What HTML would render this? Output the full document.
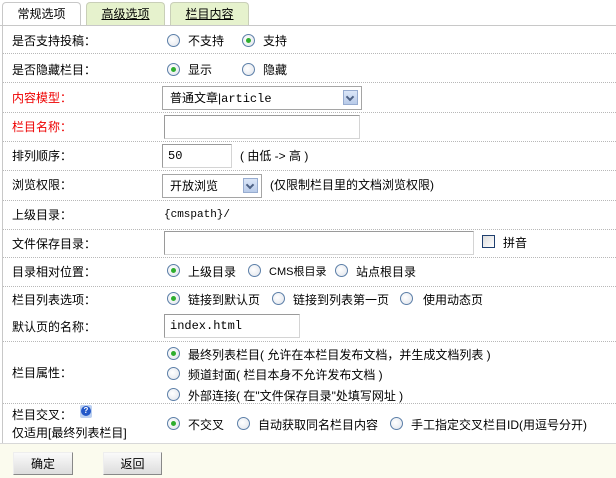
<!DOCTYPE html>
<html><head><meta charset="utf-8"><style>
body{margin:0;width:616px;height:477px;background:#fff;font-family:"Liberation Sans","Noto Sans CJK SC",sans-serif;font-size:12px;color:#000;position:relative;overflow:hidden}
.a{position:absolute;white-space:nowrap;line-height:14px}
.tab{position:absolute;top:2px;height:23px;border:1px solid #c9cfb8;border-bottom:none;border-radius:4px 4px 0 0;background:#e6f2cd;text-align:center;line-height:22px;font-size:12px}
.tab u{text-decoration:underline}
.hl{position:absolute;left:3px;right:0;border-top:1px dotted #b8b8b8;height:0}
.r{position:absolute;width:11px;height:11px;border:1px solid #5c7fa8;border-radius:50%;background:radial-gradient(circle at 40% 40%,#fff,#dfe3ea)}
.r.on::after{content:"";position:absolute;left:3px;top:3px;width:5px;height:5px;border-radius:50%;background:#2fae2f}
.in{position:absolute;border:1px solid #9a9a9a;border-right-color:#d4d4d4;border-bottom-color:#d4d4d4;background:#fff;height:22px;box-sizing:border-box;font-family:"Liberation Mono","Noto Sans CJK SC",monospace;font-size:12px;line-height:20px;padding-left:5px}
.sel{position:absolute;border:1px solid #a5a5a5;height:24px;box-sizing:border-box;background:#fff;line-height:22px;padding-left:7px}
.sel i{position:absolute;right:3px;top:3px;width:15px;height:15px;background:linear-gradient(#dbe6f8,#b8cbe9);border:1px solid #97acd0;box-sizing:border-box}
.sel i::after{content:"";position:absolute;left:3px;top:3px;width:4px;height:4px;border-right:2px solid #4d6185;border-bottom:2px solid #4d6185;transform:rotate(45deg)}
.btn{position:absolute;top:452px;height:23px;border:1px solid #888;border-top-color:#eee;border-left-color:#eee;background:linear-gradient(#fafafa,#ddd);text-align:center;line-height:22px;box-sizing:border-box}
.red{color:#e00}
</style></head><body>
<div class="tab" style="left:2px;width:77px;background:#fff;border-color:#c8c8c8">常规选项</div>
<div class="tab" style="left:86px;width:77px"><u>高级选项</u></div>
<div class="tab" style="left:170px;width:77px"><u>栏目内容</u></div>
<div style="position:absolute;left:0;right:0;top:25px;border-top:1px solid #c8c8c8"></div>
<div style="position:absolute;left:2px;top:25px;height:418px;border-left:1px solid #c8c8c8"></div>

<div class="hl" style="top:53px"></div><div class="hl" style="top:82px"></div><div class="hl" style="top:112px"></div><div class="hl" style="top:141px"></div><div class="hl" style="top:170px"></div><div class="hl" style="top:200px"></div><div class="hl" style="top:229px"></div><div class="hl" style="top:257px"></div><div class="hl" style="top:286px"></div><div class="hl" style="top:341px"></div><div class="hl" style="top:403px"></div>
<div style="position:absolute;left:0;right:0;top:443px;height:34px;background:#fbfbee;border-top:1px solid #d8d8d8"></div>

<div class="a" style="left:12px;top:34px">是否支持投稿：</div>
<div class="r" style="left:167px;top:34px"></div><div class="a" style="left:188px;top:34px">不支持</div>
<div class="r on" style="left:242px;top:34px"></div><div class="a" style="left:263px;top:34px">支持</div>

<div class="a" style="left:12px;top:63px">是否隐藏栏目：</div>
<div class="r on" style="left:167px;top:63px"></div><div class="a" style="left:188px;top:63px">显示</div>
<div class="r" style="left:242px;top:63px"></div><div class="a" style="left:263px;top:63px">隐藏</div>

<div class="a red" style="left:12px;top:91px">内容模型：</div>
<div class="sel" style="left:162px;top:86px;width:200px">普通文章|<span style="font-family:'Liberation Mono',monospace">article</span><i></i></div>

<div class="a red" style="left:12px;top:120px">栏目名称：</div>
<div class="in" style="left:164px;top:115px;width:196px;height:24px"></div>

<div class="a" style="left:12px;top:149px">排列顺序：</div>
<div class="in" style="left:162px;top:144px;width:70px;height:24px;line-height:22px">50</div>
<div class="a" style="left:240px;top:149px">( 由低 -&gt; 高 )</div>

<div class="a" style="left:12px;top:178px">浏览权限：</div>
<div class="sel" style="left:162px;top:174px;width:100px">开放浏览<i></i></div>
<div class="a" style="left:270px;top:178px">(仅限制栏目里的文档浏览权限)</div>

<div class="a" style="left:12px;top:208px">上级目录：</div>
<div class="a" style="left:164px;top:208px;font-family:'Liberation Mono',monospace;font-size:11px">{cmspath}/</div>

<div class="a" style="left:12px;top:237px">文件保存目录：</div>
<div class="in" style="left:164px;top:231px;width:310px;height:24px"></div>
<div style="position:absolute;left:482px;top:235px;width:11px;height:11px;border:1px solid #1f3f6f;background:linear-gradient(135deg,#ddd,#fff)"></div>
<div class="a" style="left:503px;top:236px">拼音</div>

<div class="a" style="left:12px;top:265px">目录相对位置：</div>
<div class="r on" style="left:167px;top:264px"></div><div class="a" style="left:188px;top:265px">上级目录</div>
<div class="r" style="left:248px;top:264px"></div><div class="a" style="left:269px;top:265px;font-size:11px">CMS根目录</div>
<div class="r" style="left:335px;top:264px"></div><div class="a" style="left:356px;top:265px">站点根目录</div>

<div class="a" style="left:12px;top:293px">栏目列表选项：</div>
<div class="r on" style="left:167px;top:292px"></div><div class="a" style="left:188px;top:293px">链接到默认页</div>
<div class="r" style="left:272px;top:292px"></div><div class="a" style="left:293px;top:293px">链接到列表第一页</div>
<div class="r" style="left:400px;top:292px"></div><div class="a" style="left:423px;top:293px">使用动态页</div>

<div class="a" style="left:12px;top:320px">默认页的名称：</div>
<div class="in" style="left:164px;top:314px;width:136px;height:24px;line-height:22px">index.html</div>

<div class="r on" style="left:167px;top:347px"></div><div class="a" style="left:188px;top:348px">最终列表栏目( 允许在本栏目发布文档，并生成文档列表 )</div>
<div class="a" style="left:12px;top:366px">栏目属性：</div>
<div class="r" style="left:167px;top:367px"></div><div class="a" style="left:188px;top:368px">频道封面( 栏目本身不允许发布文档 )</div>
<div class="r" style="left:167px;top:388px"></div><div class="a" style="left:188px;top:389px">外部连接( 在"文件保存目录"处填写网址 )</div>

<div class="a" style="left:12px;top:408px">栏目交叉：</div>
<div style="position:absolute;left:80px;top:405px;width:12px;height:13px;border-radius:2px;background:#bcd0f0"><div style="position:absolute;left:1px;top:1px;width:10px;height:10px;border-radius:50%;background:#2358c8;color:#fff;font-size:8px;line-height:10px;text-align:center;font-weight:bold">?</div></div>
<div class="a" style="left:12px;top:426px">仅适用[最终列表栏目]</div>
<div class="r on" style="left:167px;top:417px"></div><div class="a" style="left:188px;top:418px">不交叉</div>
<div class="r" style="left:237px;top:417px"></div><div class="a" style="left:258px;top:418px">自动获取同名栏目内容</div>
<div class="r" style="left:390px;top:417px"></div><div class="a" style="left:411px;top:418px">手工指定交叉栏目ID(用逗号分开)</div>

<div class="btn" style="left:13px;width:60px">确定</div>
<div class="btn" style="left:103px;width:59px">返回</div>
</body></html>
